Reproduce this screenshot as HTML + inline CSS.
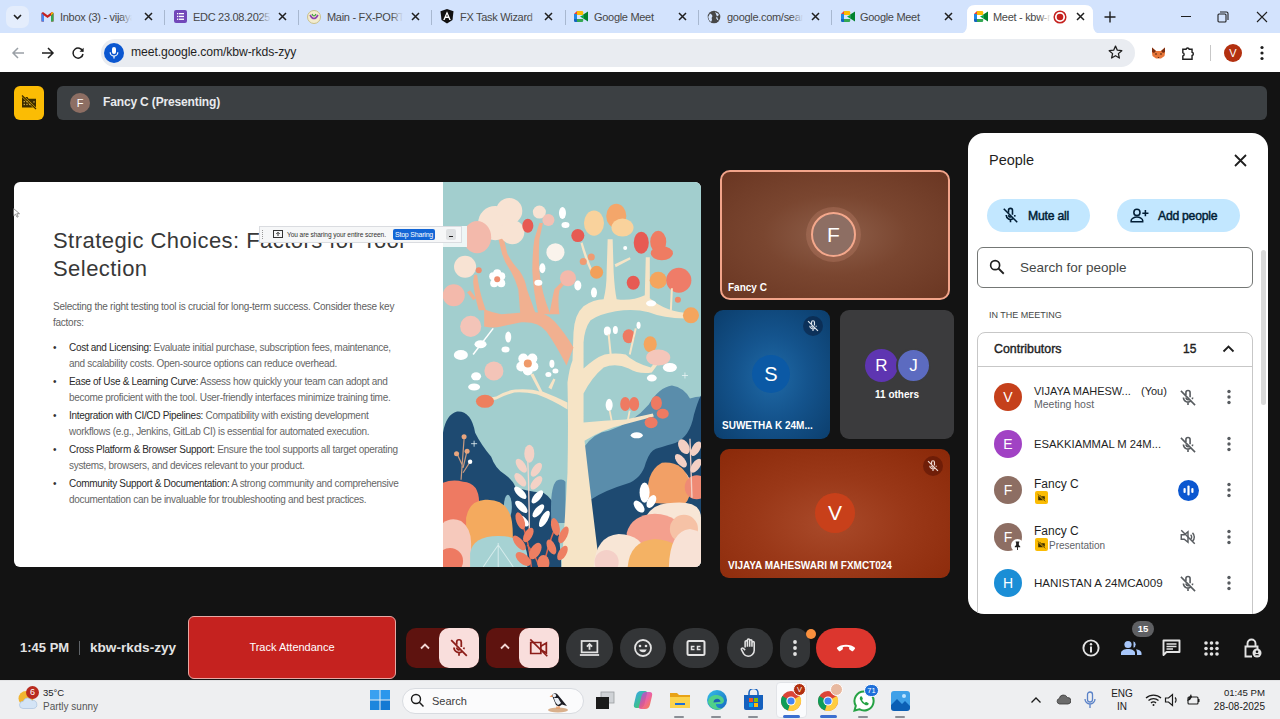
<!DOCTYPE html>
<html><head><meta charset="utf-8">
<style>
*{margin:0;padding:0;box-sizing:border-box}
html,body{width:1280px;height:719px;overflow:hidden;background:#131313;font-family:"Liberation Sans",sans-serif}
.a{position:absolute}
#tabbar{left:0;top:0;width:1280px;height:33px;background:#d3e3fd}
#toolbar{left:0;top:33px;width:1280px;height:39px;background:#fff}
#addr{left:101px;top:39px;width:1034px;height:28px;background:#e9ecf1;border-radius:14px}
#taskbar{left:0;top:680px;width:1280px;height:39px;background:#eeeff1;border-top:1px solid #e2e3e5}
.tabt{position:absolute;top:10px;font-size:11px;line-height:14px;color:#474747;letter-spacing:-0.3px;overflow:hidden;white-space:nowrap}
.tabt::after{content:"";position:absolute;right:0;top:0;width:12px;height:100%;background:linear-gradient(90deg,rgba(211,227,253,0),#d3e3fd)}
.tabt.act::after{background:linear-gradient(90deg,rgba(255,255,255,0),#fff)}
.sep{position:absolute;top:10px;width:1px;height:15px;background:#a8b8d0}
</style></head><body>
<!-- CHROME -->
<div id="tabbar" class="a"></div>
<div class="a" style="left:6px;top:6px;width:23px;height:22px;border-radius:7px;background:#e4edfc"></div>
<svg class="a" style="left:12px;top:12px" width="11" height="10" viewBox="0 0 11 10"><path d="M2 3 L5.5 6.5 L9 3" fill="none" stroke="#1f1f1f" stroke-width="1.6"/></svg>
<!-- tab 1 gmail -->
<svg class="a" style="left:41px;top:11px" width="13" height="11" viewBox="0 0 13 11"><path d="M0.5 2v8.5h2.5V4.5L6.5 7 10 4.5v6h2.5V2L11 1 6.5 4.3 2 1z" fill="#c5221f"/><path d="M0.5 2v8.5h2.5V4.5z" fill="#4285f4"/><path d="M10 4.5v6h2.5V2z" fill="#34a853"/><path d="M11 1l1.5 1L10 4.5V2.5z" fill="#fbbc04"/></svg>
<div class="tabt" style="left:60px;width:72px">Inbox (3) - vijaya</div>
<svg class="a tx" style="left:144px;top:12px" width="9" height="9" viewBox="0 0 9 9"><path d="M1 1L8 8M8 1L1 8" stroke="#1f1f1f" stroke-width="1.5"/></svg>
<div class="sep" style="left:164px"></div>
<!-- tab 2 forms -->
<div class="a" style="left:174px;top:10px;width:13px;height:13px;background:#7248b9;border-radius:2px"></div>
<svg class="a" style="left:176px;top:12px" width="9" height="9" viewBox="0 0 9 9"><g fill="#fff"><rect x="1" y="1" width="1.3" height="1.3"/><rect x="3" y="1" width="5" height="1.3"/><rect x="1" y="3.8" width="1.3" height="1.3"/><rect x="3" y="3.8" width="5" height="1.3"/><rect x="1" y="6.6" width="1.3" height="1.3"/><rect x="3" y="6.6" width="5" height="1.3"/></g></svg>
<div class="tabt" style="left:193px;width:78px">EDC 23.08.2025</div>
<svg class="a" style="left:278px;top:12px" width="9" height="9" viewBox="0 0 9 9"><path d="M1 1L8 8M8 1L1 8" stroke="#1f1f1f" stroke-width="1.5"/></svg>
<div class="sep" style="left:298px"></div>
<!-- tab 3 -->
<div class="a" style="left:307px;top:10px;width:14px;height:14px;border-radius:50%;background:#f3eccf;border:1px solid #c9c08a"></div>
<svg class="a" style="left:309px;top:13px" width="10" height="8" viewBox="0 0 10 8"><path d="M1 2 Q5 9 9 2" fill="none" stroke="#8e44ad" stroke-width="1.6"/><path d="M3 1 Q5 5 7 1" fill="none" stroke="#3c9d3c" stroke-width="1.2"/></svg>
<div class="tabt" style="left:327px;width:76px">Main - FX-PORTAL</div>
<svg class="a" style="left:411px;top:12px" width="9" height="9" viewBox="0 0 9 9"><path d="M1 1L8 8M8 1L1 8" stroke="#1f1f1f" stroke-width="1.5"/></svg>
<div class="sep" style="left:431px"></div>
<!-- tab 4 angular -->
<svg class="a" style="left:440px;top:9px" width="14" height="15" viewBox="0 0 14 15"><path d="M7 0L13.5 2.3 12.5 11 7 14.5 1.5 11 0.5 2.3z" fill="#111"/><path d="M7 2.2L3.2 11h1.5l.8-2h3l.8 2h1.5zM6.1 7.6L7 5.3l.9 2.3z" fill="#fff"/></svg>
<div class="tabt" style="left:460px;width:80px">FX Task Wizard</div>
<svg class="a" style="left:544px;top:12px" width="9" height="9" viewBox="0 0 9 9"><path d="M1 1L8 8M8 1L1 8" stroke="#1f1f1f" stroke-width="1.5"/></svg>
<div class="sep" style="left:565px"></div>
<!-- tab 5 meet -->
<svg class="a meeti" style="left:574px;top:11px" width="14" height="11" viewBox="0 0 14 11"><path d="M3 0h6v3.5L9 0z" fill="#fbbc04"/><path d="M0 3L3 0v3z" fill="#ea4335"/><path d="M0 3h3v5H0z" fill="#1e88e5"/><path d="M0 8h3v3H1.2A1.2 1.2 0 0 1 0 9.8z" fill="#1565c0"/><path d="M3 0h5a1.2 1.2 0 0 1 1.2 1.2V4H3z" fill="#fbbc04"/><path d="M3 8h6.2v1.8A1.2 1.2 0 0 1 8 11H3z" fill="#34a853"/><path d="M9.2 3.5L14 0.5v10L9.2 7.5z" fill="#00832d"/><path d="M9.2 4v3.5L6 5.5z" fill="#00ac47"/></svg>
<div class="tabt" style="left:594px;width:80px">Google Meet</div>
<svg class="a" style="left:678px;top:12px" width="9" height="9" viewBox="0 0 9 9"><path d="M1 1L8 8M8 1L1 8" stroke="#1f1f1f" stroke-width="1.5"/></svg>
<div class="sep" style="left:698px"></div>
<!-- tab 6 globe -->
<svg class="a" style="left:707px;top:10px" width="14" height="14" viewBox="0 0 14 14"><circle cx="7" cy="7" r="6.3" fill="#474747"/><path d="M3 3.5 Q5 4 5.5 6 Q4 8 5 10 L4 12 Q1.5 10 1.2 7z M8 1.5 Q9 3 11 3.5 L12 5 Q10 6 9 8 Q10 10 11.5 10.5" fill="#d3e3fd"/></svg>
<div class="tabt" style="left:727px;width:76px">google.com/search</div>
<svg class="a" style="left:811px;top:12px" width="9" height="9" viewBox="0 0 9 9"><path d="M1 1L8 8M8 1L1 8" stroke="#1f1f1f" stroke-width="1.5"/></svg>
<div class="sep" style="left:831px"></div>
<!-- tab 7 meet -->
<svg class="a" style="left:841px;top:11px" width="14" height="11" viewBox="0 0 14 11"><path d="M0 3L3 0v3z" fill="#ea4335"/><path d="M0 3h3v5H0z" fill="#1e88e5"/><path d="M0 8h3v3H1.2A1.2 1.2 0 0 1 0 9.8z" fill="#1565c0"/><path d="M3 0h5a1.2 1.2 0 0 1 1.2 1.2V4H3z" fill="#fbbc04"/><path d="M3 8h6.2v1.8A1.2 1.2 0 0 1 8 11H3z" fill="#34a853"/><path d="M9.2 3.5L14 0.5v10L9.2 7.5z" fill="#00832d"/><path d="M9.2 4v3.5L6 5.5z" fill="#00ac47"/></svg>
<div class="tabt" style="left:860px;width:80px">Google Meet</div>
<svg class="a" style="left:944px;top:12px" width="9" height="9" viewBox="0 0 9 9"><path d="M1 1L8 8M8 1L1 8" stroke="#1f1f1f" stroke-width="1.5"/></svg>
<!-- active tab -->
<svg class="a" style="left:958px;top:5px" width="144" height="29" viewBox="0 0 144 29"><path d="M0 29 Q9 29 9 20 V8 Q9 0 17 0 H127 Q135 0 135 8 V20 Q135 29 144 29z" fill="#fff"/></svg>
<svg class="a" style="left:974px;top:11px" width="14" height="11" viewBox="0 0 14 11"><path d="M0 3L3 0v3z" fill="#ea4335"/><path d="M0 3h3v5H0z" fill="#1e88e5"/><path d="M0 8h3v3H1.2A1.2 1.2 0 0 1 0 9.8z" fill="#1565c0"/><path d="M3 0h5a1.2 1.2 0 0 1 1.2 1.2V4H3z" fill="#fbbc04"/><path d="M3 8h6.2v1.8A1.2 1.2 0 0 1 8 11H3z" fill="#34a853"/><path d="M9.2 3.5L14 0.5v10L9.2 7.5z" fill="#00832d"/><path d="M9.2 4v3.5L6 5.5z" fill="#00ac47"/></svg>
<div class="tabt act" style="left:993px;width:58px">Meet - kbw-rkds-zyy</div>
<svg class="a" style="left:1053px;top:10px" width="14" height="14" viewBox="0 0 14 14"><circle cx="7" cy="7" r="5.8" fill="none" stroke="#c5221f" stroke-width="1.5"/><circle cx="7" cy="7" r="3.3" fill="#c5221f"/></svg>
<svg class="a" style="left:1076px;top:12px" width="9" height="9" viewBox="0 0 9 9"><path d="M1 1L8 8M8 1L1 8" stroke="#1f1f1f" stroke-width="1.5"/></svg>
<svg class="a" style="left:1104px;top:11px" width="12" height="12" viewBox="0 0 12 12"><path d="M6 0.5V11.5M0.5 6H11.5" stroke="#1f1f1f" stroke-width="1.4"/></svg>
<!-- window controls -->
<div class="a" style="left:1181px;top:16px;width:10px;height:1px;background:#1f1f1f"></div>
<svg class="a" style="left:1217px;top:11px" width="12" height="12" viewBox="0 0 12 12"><rect x="1" y="3" width="8" height="8" rx="1" fill="none" stroke="#1f1f1f" stroke-width="1.1"/><path d="M3 1H9.5Q11 1 11 2.5V9" fill="none" stroke="#1f1f1f" stroke-width="1.1"/></svg>
<svg class="a" style="left:1256px;top:11px" width="12" height="12" viewBox="0 0 12 12"><path d="M1 1L11 11M11 1L1 11" stroke="#1f1f1f" stroke-width="1.1"/></svg>
<!-- toolbar -->
<div id="toolbar" class="a"></div>
<svg class="a" style="left:11px;top:46px" width="14" height="14" viewBox="0 0 14 14"><path d="M13 7H2M7 2L2 7L7 12" fill="none" stroke="#9aa0a6" stroke-width="1.5"/></svg>
<svg class="a" style="left:41px;top:46px" width="14" height="14" viewBox="0 0 14 14"><path d="M1 7H12M7 2L12 7L7 12" fill="none" stroke="#1f1f1f" stroke-width="1.5"/></svg>
<svg class="a" style="left:71px;top:46px" width="14" height="14" viewBox="0 0 14 14"><path d="M11.8 5.5A5 5 0 1 0 12 8" fill="none" stroke="#1f1f1f" stroke-width="1.5"/><path d="M8.5 5.8H12.6V1.7z" fill="#1f1f1f"/></svg>
<div id="addr" class="a"></div>
<div class="a" style="left:104px;top:43px;width:20px;height:20px;border-radius:50%;background:#0b57d0"></div>
<svg class="a" style="left:108px;top:46px" width="12" height="14" viewBox="0 0 12 14"><rect x="4" y="1" width="4" height="7" rx="2" fill="#fff"/><path d="M2.2 6.2A3.8 3.8 0 0 0 9.8 6.2" fill="none" stroke="#fff" stroke-width="1.2"/><path d="M6 10V12.5" stroke="#fff" stroke-width="1.2"/></svg>
<div class="a" style="left:131px;top:45px;font-size:12.2px;color:#1f1f1f;letter-spacing:-0.1px">meet.google.com/kbw-rkds-zyy</div>
<svg class="a" style="left:1107px;top:44px" width="17" height="17" viewBox="0 0 24 24"><path d="M12 3l2.6 5.8 6.3.6-4.8 4.2 1.4 6.2L12 16.6 6.5 19.8l1.4-6.2L3.1 9.4l6.3-.6z" fill="none" stroke="#1f1f1f" stroke-width="1.8" stroke-linejoin="round"/></svg>
<svg class="a" style="left:1151px;top:47px" width="15" height="12" viewBox="0 0 15 12"><path d="M1 0.500L5 4H10L14 0.500L14 6L13.500 9L10 11.500H5L1.500 9L1 6z" fill="#e8773a"/><path d="M1 0.500L5 4L3 6L1 5z M14 0.500L10 4L12 6L14 5z" fill="#7a2e12"/><circle cx="5" cy="7" r="0.8" fill="#3a1a0a"/><circle cx="10" cy="7" r="0.8" fill="#3a1a0a"/><path d="M6.500 10h2l-1 1z" fill="#3a1a0a"/></svg>
<svg class="a" style="left:1180px;top:45px" width="17" height="17" viewBox="0 0 24 24"><path d="M4 6h4.5a2.3 2.3 0 0 1 4.5 0H17v4.3a2.3 2.3 0 0 1 0 4.5V20H4v-4.5a2.3 2.3 0 0 0 0-4.5z" fill="none" stroke="#1f1f1f" stroke-width="2"/></svg>
<div class="a" style="left:1210px;top:45px;width:1px;height:16px;background:#c7c7c7"></div>
<div class="a" style="left:1224px;top:44px;width:18px;height:18px;border-radius:50%;background:#b3300f;color:#fff;font-size:11px;text-align:center;line-height:18px">V</div>
<svg class="a" style="left:1259px;top:45px" width="6" height="16" viewBox="0 0 6 16"><circle cx="3" cy="2.5" r="1.6" fill="#1f1f1f"/><circle cx="3" cy="8" r="1.6" fill="#1f1f1f"/><circle cx="3" cy="13.5" r="1.6" fill="#1f1f1f"/></svg>
<!-- MEET TOP -->
<div class="a" style="left:0;top:72px;width:1280px;height:608px;background:#131313"></div>
<div class="a" style="left:14px;top:86px;width:30px;height:34px;border-radius:6px;background:#fbbc04"></div>
<svg class="a" style="left:19px;top:92px" width="20" height="20" viewBox="0 0 20 20"><path d="M3 5H8.500L9.500 6.800H17V15.500H3z" fill="#3a2c00"/><path d="M10.500 8.300H15.500V14H10.500z" fill="#fbbc04" opacity="0"/><path d="M3 3.500L17 17" stroke="#fbbc04" stroke-width="2.400"/><path d="M3 3.500L17 17" stroke="#3a2c00" stroke-width="1.200"/><path d="M9 8.500L14.500 14H15.500V8.300H10.500z" fill="#fbbc04" opacity="0.0"/><g fill="#c9a640"><rect x="4.600" y="9" width="1.400" height="1.300"/><rect x="7.300" y="9" width="1.400" height="1.300"/><rect x="4.600" y="11.800" width="1.400" height="1.300"/><rect x="7.300" y="11.800" width="1.400" height="1.300"/><rect x="10" y="11.800" width="1.400" height="1.300"/></g><rect x="14.300" y="9.200" width="1.400" height="1.400" fill="#c9a640"/></svg>
<div class="a" style="left:57px;top:86px;width:1210px;height:34px;border-radius:6px;background:#3c4043"></div>
<div class="a" style="left:70px;top:93px;width:20px;height:20px;border-radius:50%;background:#8d6e63;color:#fff;font-size:11px;text-align:center;line-height:20px">F</div>
<div class="a" style="left:103px;top:95px;font-size:12px;font-weight:bold;color:#e8eaed;letter-spacing:-0.15px">Fancy C (Presenting)</div>
<!-- SLIDE -->
<div class="a" style="left:14px;top:182px;width:687px;height:385px;border-radius:6px;overflow:hidden;background:#fff">
  <div class="a" style="left:39px;top:45px;font-size:22px;line-height:28px;color:#383838;letter-spacing:0.45px;white-space:nowrap">Strategic Choices: Factors for Tool<br>Selection</div>
  <div class="a" style="left:39px;top:117px;font-size:10px;line-height:15.6px;color:#5f5f5f;letter-spacing:-0.25px;white-space:nowrap">Selecting the right testing tool is crucial for long-term success. Consider these key<br>factors:</div>
  <div class="a sl" style="left:39px;top:158px;font-size:10px;line-height:15.6px;color:#666;letter-spacing:-0.3px;white-space:nowrap">
    <div style="position:relative;height:34px;padding-left:16px"><span style="position:absolute;left:0;color:#333">•</span><span style="color:#2a2a2a">Cost and Licensing:</span> Evaluate initial purchase, subscription fees, maintenance,<br>and scalability costs. Open-source options can reduce overhead.</div>
    <div style="position:relative;height:34px;padding-left:16px"><span style="position:absolute;left:0;color:#333">•</span><span style="color:#2a2a2a">Ease of Use &amp; Learning Curve:</span> Assess how quickly your team can adopt and<br>become proficient with the tool. User-friendly interfaces minimize training time.</div>
    <div style="position:relative;height:34px;padding-left:16px"><span style="position:absolute;left:0;color:#333">•</span><span style="color:#2a2a2a">Integration with CI/CD Pipelines:</span> Compatibility with existing development<br>workflows (e.g., Jenkins, GitLab CI) is essential for automated execution.</div>
    <div style="position:relative;height:34px;padding-left:16px"><span style="position:absolute;left:0;color:#333">•</span><span style="color:#2a2a2a">Cross Platform &amp; Browser Support:</span> Ensure the tool supports all target operating<br>systems, browsers, and devices relevant to your product.</div>
    <div style="position:relative;height:34px;padding-left:16px"><span style="position:absolute;left:0;color:#333">•</span><span style="color:#2a2a2a">Community Support &amp; Documentation:</span> A strong community and comprehensive<br>documentation can be invaluable for troubleshooting and best practices.</div>
  </div>
  <svg class="a" style="left:429px;top:0" width="258" height="385" viewBox="0 0 257 384" preserveAspectRatio="none">
    <rect width="257" height="384" fill="#a2cece"/>
    <!-- medium blue hill right -->
    <path d="M136 384 L140 265 Q150 250 165 248 Q190 240 205 222 Q215 205 228 203 Q240 205 246 216 Q252 214 257 214 V384z" fill="#5a8dab"/>
    <!-- navy hill right -->
    <path d="M145 384 L147 317 Q160 308 183 301 Q198 296 202 280 Q206 268 212 266 Q225 262 232 260 Q246 254 250 232 Q254 218 257 213 V384z" fill="#1e4a71"/>
    <!-- navy hill left -->
    <path d="M0 384 V250 Q3 232 14 229 Q28 228 32 250 Q38 262 48 274 Q52 286 62 292 Q70 298 72 304 Q80 308 100 310 Q110 316 114 331 L118 384z" fill="#1e4a71"/>
    <!-- medium blue behind trunk left -->
    <path d="M108 340 Q106 305 113 298 Q119 295 122 299 V340z" fill="#5a8dab"/>
    <!-- trunk -->
    <path d="M118 384 Q122 330 124 290 Q125 240 124 200 Q126 185 129 178 L130 150 Q131 132 140 124 Q150 117 160 117 Q163 105 163 90 L164 57 L169 57 L170 90 Q171 108 173 117 Q188 119 201 113 L202 75 L206 75 L206 116 Q222 130 247 131 L247 136 Q222 137 205 130 Q190 126 172 129 Q155 132 147 138 Q141 146 140 160 L140 186 Q152 175 161 172 Q172 170 182 172 Q190 180 207 185 L214 176 L216 179 L208 190 Q195 192 185 186 Q172 180 160 185 Q148 195 140 211 L140 240 Q160 238 182 237 L209 231 L210 234 L183 241 Q160 246 141 258 Q148 320 156 384z" fill="#f6e4c6"/>
    <!-- cream branch left of trunk -->
    <path d="M124 227 Q110 218 94 212 Q80 209 71 210 Q60 213 53 217 L42 219 L42 216 L53 214 Q63 208 72 207 Q88 206 96 209 L87 192 L90 191 L99 209 Q112 214 124 220z M105 205 L110 196 L112 197 L108 207z" fill="#f6e4c6"/>
    <path d="M139 60 Q145 80 150 90 L148 91 Q142 80 137 61z M171 82 L186 75 L187 77 L172 85z" fill="#f6e4c6"/>
    <!-- pink branch -->
    <path d="M130 165 Q121 150 111 139 Q101 128 82 130 L58 132 Q48 130 41 127 L41 144 Q50 146 58 144 L78 140 Q95 139 103 149 Q113 163 123 183z" fill="#f1b090"/>
    <path d="M77 132 L75 107 Q72 97 67.6 89 Q61 80 58.7 71 L55 56 L60.5 56 L64 71 Q68 80 76.5 89 Q82 97 83.6 107 L92.5 132z" fill="#f1b090"/>
    <path d="M95 132 Q90 110 89 89 Q89 70 91 57 L96 41 L99.6 41 L96 57 Q95 72 96 89 Q98 110 107 132z" fill="#f1b090"/>
    <path d="M106 132 Q109 115 111 107 L123 95 L125 97 L116 108 Q114 118 116 132z" fill="#f1b090"/>
    <path d="M35.6 128 Q31 112 30 99.6 L31 92.5 L34 92.5 L35 99.6 Q37 112 42.7 128z" fill="#f1b090"/>
    <path d="M30 118 L24 110 L27 108 L33 116z" fill="#f1b090"/>
    <!-- top cream leaves -->
    <circle cx="52" cy="41" r="17" fill="#f8e3d3"/>
    <circle cx="66" cy="29" r="13" fill="#f8e3d3"/>
    <circle cx="69" cy="50" r="12" fill="#f8e3d3"/>
    <ellipse cx="34" cy="55" rx="14" ry="16" fill="#f3b9ab"/>
    <ellipse cx="84.5" cy="43.6" rx="5.5" ry="7" fill="#e75a53"/>
    <circle cx="96" cy="30" r="6.5" fill="#f8e3d3"/>
    <circle cx="105" cy="38" r="6" fill="#f3c1b5"/>
    <ellipse cx="119" cy="31" rx="3.5" ry="6" fill="#fff"/>
    <ellipse cx="122" cy="43" rx="4" ry="3" fill="#fff"/>
    <circle cx="112" cy="70" r="9" fill="#faf3ec"/>
    <circle cx="22" cy="84.5" r="11" fill="#f8e3d3"/>
    <circle cx="35.6" cy="88" r="3" fill="#ee8e70"/>
    <g fill="#fff"><circle cx="50" cy="94" r="4"/><circle cx="58" cy="94" r="4"/><circle cx="51" cy="101" r="4"/><circle cx="58" cy="101" r="4"/><circle cx="54" cy="91" r="4"/></g><circle cx="54" cy="97" r="3" fill="#ee8e70"/>
    <circle cx="10.7" cy="113" r="11" fill="#f3b9ab"/>
    <ellipse cx="124.5" cy="96" rx="8" ry="8" fill="#f3b9ab"/>
    <ellipse cx="99" cy="86" rx="3" ry="5" fill="#fff"/>
    <ellipse cx="95" cy="100.5" rx="4" ry="3" fill="#fff"/>
    <!-- right top leaves -->
    <ellipse cx="150.4" cy="41" rx="10" ry="12.5" fill="#f9d29c"/>
    <ellipse cx="172.6" cy="33.8" rx="10" ry="12" fill="#f4a66a"/>
    <ellipse cx="178.8" cy="45.4" rx="11" ry="9" fill="#f9d29c"/>
    <circle cx="134.3" cy="53.4" r="6.5" fill="#e75a53"/>
    <ellipse cx="197.5" cy="60.5" rx="7.5" ry="11" fill="#e75a53"/>
    <ellipse cx="214.4" cy="59.6" rx="8" ry="11" fill="#ef7c62"/>
    <ellipse cx="218" cy="71" rx="11" ry="7" fill="#ef7c62"/>
    <circle cx="139.7" cy="79.2" r="3.5" fill="#ef9b72"/><circle cx="147.7" cy="74.7" r="3.5" fill="#ef9b72"/>
    <circle cx="153" cy="90" r="6.5" fill="#f2a05a"/>
    <ellipse cx="189.5" cy="100.5" rx="6.5" ry="7" fill="#e75a53"/>
    <circle cx="214.4" cy="98" r="8.5" fill="#f4a55e"/>
    <circle cx="234.9" cy="98" r="12.5" fill="#ef7c68"/>
    <path d="M228 106 L227 128" stroke="#f6e4c6" stroke-width="2"/>
    <circle cx="234" cy="117.4" r="3" fill="#ef8a6a"/>
    <ellipse cx="134.3" cy="103.2" rx="3.5" ry="5" fill="#fff"/>
    <ellipse cx="150.4" cy="110.3" rx="3" ry="5" fill="#fff"/>
    <ellipse cx="207.3" cy="121" rx="5" ry="3" fill="#fff"/>
    <circle cx="181.5" cy="65.8" r="2" fill="#fff"/>
    <circle cx="247" cy="133" r="8" fill="#f4a55e"/>
    <!-- mid leaves -->
    <circle cx="27.6" cy="144" r="10.5" fill="#f3c4b8"/>
    <ellipse cx="37.4" cy="161.8" rx="6" ry="4" fill="#fff"/>
    <ellipse cx="17.8" cy="172.5" rx="7" ry="5" fill="#fff"/>
    <path d="M50 146 L30 172" stroke="#fff" stroke-width="1.5"/>
    <ellipse cx="65" cy="154.7" rx="3" ry="5.5" fill="#fff"/>
    <ellipse cx="62.3" cy="167" rx="4" ry="3" fill="#fff"/>
    <g fill="#fff"><circle cx="80" cy="176" r="5"/><circle cx="89" cy="176" r="5"/><circle cx="78" cy="184" r="5"/><circle cx="90" cy="184" r="5"/><circle cx="84.5" cy="188" r="5"/></g><circle cx="84.5" cy="181" r="4" fill="#ef9a6a"/>
    <circle cx="50.7" cy="188.5" r="9.5" fill="#f3c4b8"/>
    <ellipse cx="33" cy="193.8" rx="5" ry="4" fill="#fff"/>
    <ellipse cx="31" cy="204.5" rx="6" ry="3.5" fill="#fff"/>
    <ellipse cx="41.8" cy="218.7" rx="9" ry="6.5" fill="#ee7f5e"/>
    <ellipse cx="108.5" cy="181.4" rx="2.5" ry="4" fill="#fff"/><ellipse cx="112" cy="188.5" rx="3" ry="2.5" fill="#fff"/><ellipse cx="105" cy="192" rx="3" ry="2.5" fill="#fff"/>
    <ellipse cx="185" cy="153.8" rx="6" ry="7" fill="#ee7a62"/>
    <ellipse cx="206.4" cy="161.8" rx="6.5" ry="8" fill="#f4a55e"/>
    <ellipse cx="163.7" cy="148.5" rx="3.5" ry="4.5" fill="#fff"/><ellipse cx="171.7" cy="147.6" rx="2.5" ry="4" fill="#fff"/><ellipse cx="194.8" cy="143" rx="2" ry="3.5" fill="#fff"/>
    <path d="M165 152 L167 172 M192 146 L186 172" stroke="#f6e4c6" stroke-width="2"/>
    <ellipse cx="214.4" cy="175" rx="12" ry="8" fill="#f4c6ba"/>
    <ellipse cx="226" cy="185" rx="7" ry="4.5" fill="#fff"/>
    <ellipse cx="208" cy="195.6" rx="5" ry="3.5" fill="#fff"/>
    <ellipse cx="181.5" cy="221.4" rx="5" ry="7" fill="#ee7a62"/><ellipse cx="190.4" cy="221.4" rx="5" ry="7" fill="#ee7a62"/>
    <ellipse cx="212.6" cy="220.5" rx="5.5" ry="7" fill="#ee7a62"/>
    <ellipse cx="218.9" cy="231.2" rx="6" ry="5" fill="#ee7a62"/>
    <ellipse cx="207.3" cy="240" rx="6.5" ry="5.5" fill="#ee7a62"/>
    <ellipse cx="165.5" cy="222.3" rx="3.5" ry="6" fill="#fff"/>
    <ellipse cx="193" cy="252.6" rx="6" ry="3" fill="#fff"/>
    <path d="M186 228 L184 238 M166 228 L168 238" stroke="#f6e4c6" stroke-width="1.8"/>
    <!-- twig buds left -->
    <path d="M21 256 L18 297 M14 271 L19 282 M24 268 L20 285 M27 279 L20 290" stroke="#c99a80" stroke-width="1.2" fill="none"/>
    <circle cx="13.5" cy="271" r="2.5" fill="#e9a57e"/><circle cx="24" cy="268.6" r="2.5" fill="#e9a57e"/><circle cx="27" cy="279" r="2.2" fill="#fff"/><circle cx="21" cy="254" r="2.5" fill="#e9a57e"/>
    <!-- fern left -->
    <path d="M84 265 Q86 310 86 355" stroke="#f4d6cc" stroke-width="1.3" fill="none"/>
    <g fill="#f4d2c6"><ellipse cx="86" cy="271" rx="5" ry="9"/><ellipse cx="78" cy="283" rx="4" ry="8" transform="rotate(-35 78 283)"/><ellipse cx="93" cy="287" rx="4" ry="8" transform="rotate(35 93 287)"/><ellipse cx="77" cy="297" rx="4" ry="8" transform="rotate(-40 77 297)"/><ellipse cx="93" cy="300" rx="4" ry="8" transform="rotate(40 93 300)"/></g>
    <g fill="#fff"><ellipse cx="77" cy="310" rx="3.5" ry="8" transform="rotate(-45 77 310)"/><ellipse cx="94" cy="314" rx="3.5" ry="8" transform="rotate(40 94 314)"/><ellipse cx="78" cy="324" rx="3.5" ry="8" transform="rotate(-45 78 324)"/><ellipse cx="95" cy="328" rx="3.5" ry="8" transform="rotate(40 95 328)"/><ellipse cx="80" cy="338" rx="3.5" ry="7" transform="rotate(-45 80 338)"/><ellipse cx="101" cy="336" rx="3.5" ry="9" transform="rotate(30 101 336)"/></g>
    <ellipse cx="64.6" cy="324" rx="4" ry="12" fill="#8dbcc9"/>
    <!-- left bushes -->
    <path d="M0 300 Q10 296 20 299 Q36 300 36 320 L36 384 H0z" fill="#ee7a62"/>
    <path d="M23 384 V335 Q26 318 42 317 Q60 316 66 330 Q72 340 68 384z" fill="#f4aa5e"/>
    <path d="M0 384 V340 Q8 334 18 338 Q28 345 28 360 V384z" fill="#f6c9bc"/>
    <circle cx="7" cy="378" r="13" fill="#ee7a62"/>
    <path d="M27 384 V370 Q30 353 55 353 Q82 353 84 372 V384z" fill="#a6d2d3"/>
    <path d="M40 384 Q48 372 55 362 M55 384 V360 M70 384 Q62 372 55 362" stroke="#d6ecec" stroke-width="1" fill="none"/>
    <!-- coral plants -->
    <path d="M88 384 Q86 360 78 338 M100 384 Q104 364 112 344 M96 384 Q92 372 84 362" stroke="#d9664e" stroke-width="1.5" fill="none"/>
    <g fill="#ee7f62"><ellipse cx="77" cy="338" rx="4" ry="9" transform="rotate(-20 77 338)"/><ellipse cx="85" cy="352" rx="4" ry="8" transform="rotate(30 85 352)"/><ellipse cx="76" cy="360" rx="4" ry="9" transform="rotate(-40 76 360)"/><ellipse cx="92" cy="368" rx="5" ry="9" transform="rotate(30 92 368)"/><ellipse cx="80" cy="376" rx="5" ry="9" transform="rotate(-50 80 376)"/><ellipse cx="112" cy="344" rx="4" ry="9" transform="rotate(-15 112 344)"/><ellipse cx="120" cy="352" rx="4" ry="9" transform="rotate(25 120 352)"/><ellipse cx="108" cy="364" rx="4" ry="8" transform="rotate(-25 108 364)"/><ellipse cx="119" cy="370" rx="4" ry="8" transform="rotate(30 119 370)"/><ellipse cx="100" cy="380" rx="6" ry="8"/></g>
    <!-- right bushes -->
    <g fill="#f4d0c4"><ellipse cx="240" cy="264" rx="5" ry="8" transform="rotate(-30 240 264)"/><ellipse cx="252" cy="266" rx="4" ry="8" transform="rotate(30 252 266)"/><ellipse cx="237" cy="278" rx="4" ry="8" transform="rotate(-40 237 278)"/><ellipse cx="252" cy="283" rx="4" ry="8" transform="rotate(35 252 283)"/><ellipse cx="239" cy="293" rx="4" ry="8" transform="rotate(-45 239 293)"/></g>
    <path d="M205 320 Q200 290 218 280 Q240 278 246 300 Q248 315 240 322z" fill="#f2a066"/>
    <circle cx="252.8" cy="304.4" r="12" fill="#ef8a74"/>
    <path d="M246 256 L248 315" stroke="#f4d0c4" stroke-width="1.3"/>
    <ellipse cx="200.8" cy="309.8" rx="5" ry="10" fill="#fff"/><ellipse cx="195.4" cy="324" rx="4" ry="7" transform="rotate(-40 195 324)" fill="#fff"/><ellipse cx="208" cy="318.8" rx="4" ry="7" transform="rotate(30 208 318)" fill="#fff"/>
    <path d="M200 384 V340 Q205 320 230 320 Q257 318 257 335 V384z" fill="#f8e6d6"/>
    <path d="M183 384 V350 Q188 332 211 331 Q236 332 240 352 V384z" fill="#f4a08e"/>
    <circle cx="240" cy="346" r="14" fill="#f6c2a6"/>
    <path d="M150 384 Q152 353 175 351 Q200 352 201 372 V384z" fill="#f8e6d6"/>
    <circle cx="163" cy="379" r="12" fill="#f4d0c8"/>
    <path d="M184 384 Q186 358 211 356 Q238 358 240 376 V384z" fill="#f4b264"/>
    <path d="M225 384 Q226 348 246 346 Q257 348 257 352 V384z" fill="#f8e2d6"/>
    <!-- sparkles -->
    <path d="M241 190 V196 M238 193 H244 M31 258 V264 M28 261 H34" stroke="#e8f4f4" stroke-width="0.8"/>
  </svg>
</div>
<!-- share bar -->
<div class="a" style="left:443px;top:226px;width:24px;height:21px;background:#eef6f6"></div>
<div class="a" style="left:259px;top:226px;width:203px;height:17px;background:#f6f7f8;border:1px solid #dadce0"></div>
<div class="a" style="left:262px;top:230px;width:1px;height:9px;border-left:1px dotted #999"></div>
<svg class="a" style="left:273px;top:230px" width="10" height="9" viewBox="0 0 10 9"><rect x="0.5" y="0.5" width="9" height="7" fill="none" stroke="#333" stroke-width="1"/><path d="M5 6V2.5M3.3 4L5 2.3 6.7 4" fill="none" stroke="#333" stroke-width="1"/></svg>
<div class="a" style="left:287px;top:230px;font-size:6.6px;line-height:9px;color:#333;letter-spacing:-0.1px;white-space:nowrap">You are sharing your entire screen.</div>
<div class="a" style="left:393px;top:229px;width:42px;height:11px;border-radius:2px;background:#1366d6;color:#fff;font-size:7px;line-height:11px;text-align:center;letter-spacing:-0.2px;white-space:nowrap">Stop Sharing</div>
<div class="a" style="left:446px;top:229px;width:10px;height:11px;border-radius:2px;background:#dfe1e3"></div>
<div class="a" style="left:449px;top:236px;width:4px;height:1px;background:#222"></div>
<!-- cursor -->
<svg class="a" style="left:13px;top:208px" width="7" height="10" viewBox="0 0 7 10"><path d="M0.5 0.5V8L2.5 6.2 4 9.2 5.2 8.6 3.8 5.7H6.5z" fill="#fff" stroke="#555" stroke-width="0.6"/></svg>
<!-- TILES -->
<div class="a" style="left:720px;top:170px;width:230px;height:130px;border-radius:10px;border:2px solid #f2a48a;background:radial-gradient(ellipse at 50% 50%,#8e5f4a 0%,#7a4630 45%,#6a3622 100%)"></div>
<div class="a" style="left:806px;top:207px;width:55px;height:55px;border-radius:50%;background:rgba(190,130,105,0.35)"></div>
<div class="a" style="left:811px;top:212px;width:45px;height:45px;border-radius:50%;border:2px solid #f4a88c;background:#8d6e63;color:#fff;font-size:21px;line-height:41px;text-align:center">F</div>
<div class="a" style="left:728px;top:282px;font-size:10px;font-weight:bold;color:#fff;white-space:nowrap">Fancy C</div>

<div class="a" style="left:714px;top:310px;width:116px;height:129px;border-radius:9px;background:radial-gradient(ellipse at 50% 52%,#1f69a6 0%,#14538c 45%,#0b3d6b 100%)"></div>
<div class="a" style="left:752px;top:355px;width:38px;height:38px;border-radius:50%;background:#0b59a5;color:#fff;font-size:20px;line-height:38px;text-align:center">S</div>
<div class="a" style="left:803px;top:316px;width:20px;height:20px;border-radius:50%;background:rgba(10,30,60,0.55)"></div>
<svg class="a" style="left:806px;top:319px" width="14" height="14" viewBox="0 0 24 24"><path d="M9.5 8.5V5.5a2.5 2.5 0 0 1 5 0V11" fill="none" stroke="#dfe6ee" stroke-width="2"/><path d="M9.5 11.5a2.5 2.5 0 0 0 3.5 2.2" fill="none" stroke="#dfe6ee" stroke-width="2"/><path d="M6.5 11.5a5.5 5.5 0 0 0 8.8 4.3M17.5 11.5q0 1-.4 1.8M12 17.5V20.5" fill="none" stroke="#dfe6ee" stroke-width="2"/><path d="M3.5 3.5L20.5 20.5" stroke="#dfe6ee" stroke-width="2"/></svg>
<div class="a" style="left:722px;top:420px;font-size:10px;font-weight:bold;color:#fff;white-space:nowrap">SUWETHA K 24M...</div>

<div class="a" style="left:840px;top:310px;width:114px;height:129px;border-radius:9px;background:#3b3b3d"></div>
<div class="a" style="left:865px;top:349px;width:33px;height:33px;border-radius:50%;background:#5e35b1;color:#fff;font-size:17px;line-height:33px;text-align:center">R</div>
<div class="a" style="left:896px;top:348px;width:35px;height:35px;border-radius:50%;background:#5c6bc0;border:2px solid #3b3b3d;color:#fff;font-size:17px;line-height:31px;text-align:center">J</div>
<div class="a" style="left:840px;top:389px;width:114px;text-align:center;font-size:10px;font-weight:bold;color:#fff;white-space:nowrap">11 others</div>

<div class="a" style="left:720px;top:449px;width:230px;height:129px;border-radius:9px;background:radial-gradient(ellipse at 48% 58%,#a94a2a 0%,#9a3818 45%,#8a2808 100%)"></div>
<div class="a" style="left:815px;top:493px;width:40px;height:40px;border-radius:50%;background:#c8401a;color:#fff;font-size:21px;line-height:40px;text-align:center">V</div>
<div class="a" style="left:923px;top:456px;width:20px;height:20px;border-radius:50%;background:rgba(90,20,5,0.6)"></div>
<svg class="a" style="left:926px;top:459px" width="14" height="14" viewBox="0 0 24 24"><path d="M9.5 8.5V5.5a2.5 2.5 0 0 1 5 0V11" fill="none" stroke="#f0dcd6" stroke-width="2"/><path d="M9.5 11.5a2.5 2.5 0 0 0 3.5 2.2" fill="none" stroke="#f0dcd6" stroke-width="2"/><path d="M6.5 11.5a5.5 5.5 0 0 0 8.8 4.3M17.5 11.5q0 1-.4 1.8M12 17.5V20.5" fill="none" stroke="#f0dcd6" stroke-width="2"/><path d="M3.5 3.5L20.5 20.5" stroke="#f0dcd6" stroke-width="2"/></svg>
<div class="a" style="left:728px;top:560px;font-size:10px;font-weight:bold;color:#fff;white-space:nowrap">VIJAYA MAHESWARI M FXMCT024</div>
<!-- PEOPLE PANEL -->
<div class="a" style="left:968px;top:133px;width:300px;height:481px;border-radius:16px;background:#fff"></div>
<div class="a" style="left:989px;top:151px;font-size:14.5px;line-height:18px;color:#1f1f1f">People</div>
<svg class="a" style="left:1234px;top:154px" width="13" height="13" viewBox="0 0 13 13"><path d="M1 1L12 12M12 1L1 12" stroke="#1f1f1f" stroke-width="1.8"/></svg>
<div class="a" style="left:987px;top:199px;width:103px;height:33px;border-radius:17px;background:#c2e7ff"></div>
<svg class="a" style="left:1001px;top:206px" width="19" height="19" viewBox="0 0 24 24"><path d="M9.5 8.5V5.5a2.5 2.5 0 0 1 5 0V11" fill="none" stroke="#001d35" stroke-width="2"/><path d="M9.5 11.5a2.5 2.5 0 0 0 3.5 2.2" fill="none" stroke="#001d35" stroke-width="2"/><path d="M6.5 11.5a5.5 5.5 0 0 0 8.8 4.3M17.5 11.5q0 1-.4 1.8M12 17.5V20.5" fill="none" stroke="#001d35" stroke-width="2"/><path d="M3.5 3.5L20.5 20.5" stroke="#001d35" stroke-width="2"/></svg>
<div class="a" style="left:1028px;top:209px;font-size:12.2px;line-height:15px;color:#001d35;-webkit-text-stroke:0.45px #001d35;letter-spacing:-0.2px;white-space:nowrap">Mute all</div>
<div class="a" style="left:1117px;top:199px;width:123px;height:33px;border-radius:17px;background:#c2e7ff"></div>
<svg class="a" style="left:1130px;top:206px" width="20" height="19" viewBox="0 0 26 24"><circle cx="9" cy="8" r="4" fill="none" stroke="#001d35" stroke-width="2"/><path d="M1.5 20v-1.5c0-2.5 4-4.5 7.5-4.5s7.5 2 7.5 4.5V20z" fill="none" stroke="#001d35" stroke-width="2"/><path d="M20 5v8M16 9h8" stroke="#001d35" stroke-width="2"/></svg>
<div class="a" style="left:1158px;top:209px;font-size:12.2px;line-height:15px;color:#001d35;-webkit-text-stroke:0.45px #001d35;letter-spacing:-0.25px;white-space:nowrap">Add people</div>
<div class="a" style="left:977px;top:247px;width:276px;height:41px;border-radius:6px;border:1px solid #747775"></div>
<svg class="a" style="left:988px;top:258px" width="18" height="18" viewBox="0 0 24 24"><circle cx="9.5" cy="9.5" r="6" fill="none" stroke="#1f1f1f" stroke-width="2.2"/><path d="M14 14L21 21" stroke="#1f1f1f" stroke-width="2.4"/></svg>
<div class="a" style="left:1020px;top:259px;font-size:13.5px;line-height:17px;color:#444746;white-space:nowrap">Search for people</div>
<div class="a" style="left:989px;top:310px;font-size:9px;line-height:11px;color:#444746;white-space:nowrap">IN THE MEETING</div>
<!-- scrollbar -->
<div class="a" style="left:1261px;top:250px;width:5px;height:155px;border-radius:3px;background:#d9d9d9"></div>
<!-- contributors box -->
<div class="a" style="left:968px;top:133px;width:300px;height:481px;border-radius:16px;overflow:hidden"><div class="a" style="left:9px;top:199px;width:276px;height:300px;border-radius:8px;border:1px solid #c7c7c7"></div></div>
<div class="a" style="left:978px;top:366px;width:274px;height:1px;background:#c7c7c7"></div>
<div class="a" style="left:994px;top:342px;font-size:12.4px;line-height:14px;color:#1f1f1f;-webkit-text-stroke:0.4px #1f1f1f;white-space:nowrap">Contributors</div>
<div class="a" style="left:1183px;top:342px;font-size:12px;line-height:14px;color:#1f1f1f;-webkit-text-stroke:0.4px #1f1f1f">15</div>
<svg class="a" style="left:1222px;top:344px" width="13" height="9" viewBox="0 0 13 9"><path d="M1.5 7.5L6.5 2.5 11.5 7.5" fill="none" stroke="#1f1f1f" stroke-width="1.8"/></svg>
<!-- rows -->
<div class="a av" style="left:994px;top:383px;width:28px;height:28px;border-radius:50%;background:#c5401b;color:#fff;font-size:14px;line-height:28px;text-align:center">V</div>
<div class="a" style="left:1034px;top:384px;font-size:11px;line-height:14px;color:#1f1f1f;white-space:nowrap">VIJAYA MAHESW...</div>
<div class="a" style="left:1141px;top:384px;font-size:11px;line-height:14px;color:#1f1f1f;white-space:nowrap">(You)</div>
<div class="a" style="left:1034px;top:398px;font-size:10.5px;line-height:13px;color:#5f6368;white-space:nowrap">Meeting host</div>

<div class="a av" style="left:994px;top:430px;width:28px;height:28px;border-radius:50%;background:#a142c4;color:#fff;font-size:14px;line-height:28px;text-align:center">E</div>
<div class="a" style="left:1034px;top:437px;font-size:11.25px;line-height:14px;color:#1f1f1f;white-space:nowrap">ESAKKIAMMAL M 24M...</div>

<div class="a av" style="left:994px;top:476px;width:28px;height:28px;border-radius:50%;background:#8d6e63;color:#fff;font-size:14px;line-height:28px;text-align:center">F</div>
<div class="a" style="left:1034px;top:477px;font-size:12px;line-height:14px;color:#1f1f1f;white-space:nowrap">Fancy C</div>
<div class="a" style="left:1035px;top:491px;width:13px;height:13px;border-radius:2px;background:#fbbc04"></div>
<svg class="a" style="left:1036px;top:492px" width="11" height="11" viewBox="0 0 20 20"><path d="M4 6H8L9.5 7.5H16V15H4z" fill="#3a2c00"/><path d="M3 4L17 17" stroke="#fbbc04" stroke-width="2.5"/><path d="M3 4L17 17" stroke="#3a2c00" stroke-width="1.2"/></svg>
<div class="a" style="left:1178px;top:480px;width:21px;height:21px;border-radius:50%;background:#0b57d0"></div>
<svg class="a" style="left:1178px;top:480px" width="21" height="21" viewBox="0 0 21 21"><g fill="#fff"><rect x="5.5" y="8" width="2.2" height="5" rx="1.1"/><rect x="9.4" y="5.5" width="2.2" height="10" rx="1.1"/><rect x="13.3" y="8" width="2.2" height="5" rx="1.1"/></g></svg>

<div class="a av" style="left:994px;top:523px;width:28px;height:28px;border-radius:50%;background:#8d6e63;color:#fff;font-size:14px;line-height:28px;text-align:center">F</div>
<div class="a" style="left:1011px;top:539px;width:13px;height:13px;border-radius:50%;background:#fff"></div>
<svg class="a" style="left:1012px;top:540px" width="11" height="11" viewBox="0 0 24 24"><path d="M8 3h8v2l-1 1v5l3 3v2h-5v6h-2v-6H6v-2l3-3V6L8 5z" fill="#1f1f1f"/></svg>
<div class="a" style="left:1034px;top:524px;font-size:12px;line-height:14px;color:#1f1f1f;white-space:nowrap">Fancy C</div>
<div class="a" style="left:1035px;top:538px;width:13px;height:13px;border-radius:2px;background:#fbbc04"></div>
<svg class="a" style="left:1036px;top:539px" width="11" height="11" viewBox="0 0 20 20"><path d="M4 6H8L9.5 7.5H16V15H4z" fill="#3a2c00"/><path d="M3 4L17 17" stroke="#fbbc04" stroke-width="2.5"/><path d="M3 4L17 17" stroke="#3a2c00" stroke-width="1.2"/></svg>
<div class="a" style="left:1049px;top:539px;font-size:10px;line-height:13px;color:#5f6368;white-space:nowrap">Presentation</div>

<div class="a av" style="left:994px;top:569px;width:28px;height:28px;border-radius:50%;background:#1b8ed6;color:#fff;font-size:14px;line-height:28px;text-align:center">H</div>
<div class="a" style="left:1034px;top:576px;font-size:11.6px;line-height:14px;color:#1f1f1f;white-space:nowrap">HANISTAN A 24MCA009</div>

<!-- mic off icons -->
<svg class="a" style="left:1178px;top:388px" width="20" height="20" viewBox="0 0 24 24"><path d="M9.5 8.5V5.5a2.5 2.5 0 0 1 5 0V11" fill="none" stroke="#575b5f" stroke-width="1.9"/><path d="M9.5 11.5a2.5 2.5 0 0 0 3.500 2.200" fill="none" stroke="#575b5f" stroke-width="1.9"/><path d="M6.500 11.500a5.500 5.500 0 0 0 8.800 4.300M17.500 11.500q0 1-.4 1.800M12 17.500V20.500" fill="none" stroke="#575b5f" stroke-width="1.9"/><path d="M3.500 3.500L20.500 20.500" stroke="#575b5f" stroke-width="1.9"/></svg>
<svg class="a" style="left:1178px;top:435px" width="20" height="20" viewBox="0 0 24 24"><path d="M9.5 8.5V5.5a2.5 2.5 0 0 1 5 0V11" fill="none" stroke="#575b5f" stroke-width="1.9"/><path d="M9.5 11.5a2.5 2.5 0 0 0 3.500 2.200" fill="none" stroke="#575b5f" stroke-width="1.9"/><path d="M6.500 11.500a5.500 5.500 0 0 0 8.800 4.300M17.500 11.500q0 1-.4 1.800M12 17.500V20.500" fill="none" stroke="#575b5f" stroke-width="1.9"/><path d="M3.500 3.500L20.500 20.500" stroke="#575b5f" stroke-width="1.9"/></svg>
<svg class="a" style="left:1179px;top:528px" width="18" height="18" viewBox="0 0 24 24"><path d="M3 9h4l5-4v14l-5-4H3z" fill="none" stroke="#575b5f" stroke-width="1.9"/><path d="M15.5 9a4 4 0 0 1 0 6M18 6.5a7.5 7.5 0 0 1 0 11" fill="none" stroke="#575b5f" stroke-width="1.9"/><path d="M3 3L21 21" stroke="#575b5f" stroke-width="1.9"/></svg>
<svg class="a" style="left:1178px;top:574px" width="20" height="20" viewBox="0 0 24 24"><path d="M9.5 8.5V5.5a2.5 2.5 0 0 1 5 0V11" fill="none" stroke="#575b5f" stroke-width="1.9"/><path d="M9.5 11.5a2.5 2.5 0 0 0 3.500 2.200" fill="none" stroke="#575b5f" stroke-width="1.9"/><path d="M6.500 11.500a5.500 5.500 0 0 0 8.800 4.300M17.500 11.500q0 1-.4 1.800M12 17.500V20.500" fill="none" stroke="#575b5f" stroke-width="1.9"/><path d="M3.500 3.500L20.500 20.500" stroke="#575b5f" stroke-width="1.9"/></svg>
<!-- kebabs -->
<svg class="a" style="left:1226px;top:389px" width="6" height="16" viewBox="0 0 6 16"><circle cx="3" cy="2.5" r="1.7" fill="#575b5f"/><circle cx="3" cy="8" r="1.7" fill="#575b5f"/><circle cx="3" cy="13.5" r="1.7" fill="#575b5f"/></svg>
<svg class="a" style="left:1226px;top:436px" width="6" height="16" viewBox="0 0 6 16"><circle cx="3" cy="2.5" r="1.7" fill="#575b5f"/><circle cx="3" cy="8" r="1.7" fill="#575b5f"/><circle cx="3" cy="13.5" r="1.7" fill="#575b5f"/></svg>
<svg class="a" style="left:1226px;top:482px" width="6" height="16" viewBox="0 0 6 16"><circle cx="3" cy="2.5" r="1.7" fill="#575b5f"/><circle cx="3" cy="8" r="1.7" fill="#575b5f"/><circle cx="3" cy="13.5" r="1.7" fill="#575b5f"/></svg>
<svg class="a" style="left:1226px;top:529px" width="6" height="16" viewBox="0 0 6 16"><circle cx="3" cy="2.5" r="1.7" fill="#575b5f"/><circle cx="3" cy="8" r="1.7" fill="#575b5f"/><circle cx="3" cy="13.5" r="1.7" fill="#575b5f"/></svg>
<svg class="a" style="left:1226px;top:575px" width="6" height="16" viewBox="0 0 6 16"><circle cx="3" cy="2.5" r="1.7" fill="#575b5f"/><circle cx="3" cy="8" r="1.7" fill="#575b5f"/><circle cx="3" cy="13.5" r="1.7" fill="#575b5f"/></svg>

<!-- BOTTOM BAR -->
<div class="a" style="left:20px;top:640px;font-size:13px;font-weight:bold;line-height:16px;color:#e3e3e3;white-space:nowrap">1:45 PM</div>
<div class="a" style="left:79px;top:641px;width:1px;height:14px;background:#5f6368"></div>
<div class="a" style="left:90px;top:640px;font-size:13.6px;font-weight:bold;line-height:16px;color:#e3e3e3;white-space:nowrap">kbw-rkds-zyy</div>
<div class="a" style="left:188px;top:616px;width:208px;height:63px;border-radius:6px;background:#c5221f;border:1px solid #e8a8a4"></div>
<div class="a" style="left:188px;top:640px;width:208px;text-align:center;font-size:11px;line-height:14px;color:#fff;white-space:nowrap">Track Attendance</div>
<!-- mic group -->
<div class="a" style="left:406px;top:628px;width:73px;height:40px;border-radius:10px;background:#5e130f"></div>
<div class="a" style="left:439px;top:628px;width:40px;height:40px;border-radius:10px;background:#f9dedc"></div>
<svg class="a" style="left:419px;top:642px" width="12" height="9" viewBox="0 0 12 9"><path d="M2 6.5L6 2.5 10 6.5" fill="none" stroke="#f2d6d4" stroke-width="1.8"/></svg>
<svg class="a" style="left:448px;top:637px" width="22" height="22" viewBox="0 0 24 24"><path d="M9.5 8.5V5.5a2.5 2.5 0 0 1 5 0V11" fill="none" stroke="#8c1d18" stroke-width="1.9"/><path d="M9.5 11.5a2.5 2.5 0 0 0 3.5 2.2" fill="none" stroke="#8c1d18" stroke-width="1.9"/><path d="M6.5 11.5a5.5 5.5 0 0 0 8.8 4.3M17.5 11.5q0 1-.4 1.8M12 17.5V20.5" fill="none" stroke="#8c1d18" stroke-width="1.9"/><path d="M3.5 3.5L20.5 20.5" stroke="#8c1d18" stroke-width="1.9"/></svg>
<!-- cam group -->
<div class="a" style="left:486px;top:628px;width:73px;height:40px;border-radius:10px;background:#5e130f"></div>
<div class="a" style="left:519px;top:628px;width:40px;height:40px;border-radius:10px;background:#f9dedc"></div>
<svg class="a" style="left:499px;top:642px" width="12" height="9" viewBox="0 0 12 9"><path d="M2 6.5L6 2.5 10 6.5" fill="none" stroke="#f2d6d4" stroke-width="1.8"/></svg>
<svg class="a" style="left:528px;top:637px" width="22" height="22" viewBox="0 0 24 24"><path d="M3 6h11v12H3z" fill="none" stroke="#8c1d18" stroke-width="1.9"/><path d="M14 10l6-3.5v11L14 14" fill="none" stroke="#8c1d18" stroke-width="1.9"/><path d="M2.5 2.5L21 21" stroke="#8c1d18" stroke-width="1.9"/></svg>
<!-- present -->
<div class="a" style="left:566px;top:628px;width:47px;height:40px;border-radius:20px;background:#333537"></div>
<svg class="a" style="left:579px;top:638px" width="21" height="20" viewBox="0 0 24 22"><rect x="3" y="3" width="18" height="13" fill="none" stroke="#e3e3e3" stroke-width="2"/><path d="M1 19h22" stroke="#e3e3e3" stroke-width="2"/><path d="M12 13V7M9 9.5l3-3 3 3" fill="none" stroke="#e3e3e3" stroke-width="2"/></svg>
<!-- emoji -->
<div class="a" style="left:620px;top:628px;width:46px;height:40px;border-radius:20px;background:#333537"></div>
<svg class="a" style="left:633px;top:638px" width="20" height="20" viewBox="0 0 20 20"><circle cx="10" cy="10" r="8" fill="none" stroke="#e3e3e3" stroke-width="1.8"/><circle cx="7" cy="8" r="1.3" fill="#e3e3e3"/><circle cx="13" cy="8" r="1.3" fill="#e3e3e3"/><path d="M6.2 11.5a4 4 0 0 0 7.6 0z" fill="#e3e3e3"/></svg>
<!-- cc -->
<div class="a" style="left:673px;top:628px;width:46px;height:40px;border-radius:20px;background:#333537"></div>
<svg class="a" style="left:686px;top:639px" width="20" height="18" viewBox="0 0 20 18"><rect x="1.5" y="2" width="17" height="14" rx="1.5" fill="none" stroke="#e3e3e3" stroke-width="2"/><path d="M8.5 7.5H5.5V10.5H8.5M14.5 7.5H11.5V10.5H14.5" fill="none" stroke="#e3e3e3" stroke-width="1.5"/></svg>
<!-- hand -->
<div class="a" style="left:727px;top:628px;width:46px;height:40px;border-radius:20px;background:#333537"></div>
<svg class="a" style="left:739px;top:637px" width="21" height="21" viewBox="0 0 24 24"><path d="M7 12V5.5a1.3 1.3 0 0 1 2.6 0V11M9.6 11V3.5a1.3 1.3 0 0 1 2.6 0V11M12.2 11V4.5a1.3 1.3 0 0 1 2.6 0V11M14.8 11V6.5a1.3 1.3 0 0 1 2.6 0V15a7 7 0 0 1-7 7 6 6 0 0 1-5-2.7L2.8 14.5a1.3 1.3 0 0 1 2-1.6L7 15" fill="none" stroke="#e3e3e3" stroke-width="1.8" stroke-linejoin="round"/></svg>
<!-- more -->
<div class="a" style="left:780px;top:628px;width:30px;height:40px;border-radius:15px;background:#333537"></div>
<svg class="a" style="left:792px;top:639px" width="6" height="18" viewBox="0 0 6 18"><circle cx="3" cy="3" r="1.9" fill="#e3e3e3"/><circle cx="3" cy="9" r="1.9" fill="#e3e3e3"/><circle cx="3" cy="15" r="1.9" fill="#e3e3e3"/></svg>
<div class="a" style="left:806px;top:629px;width:10px;height:10px;border-radius:50%;background:#fa903e"></div>
<!-- end call -->
<div class="a" style="left:816px;top:628px;width:60px;height:40px;border-radius:20px;background:#dc362e"></div>
<svg class="a" style="left:836px;top:641px" width="20" height="14" viewBox="0 0 24 14"><path d="M12 3C7.5 3 3.5 4.3 1.5 6.5a1.3 1.3 0 0 0 0 1.8l2 2.2a1.3 1.3 0 0 0 1.7.2l2.6-1.8a1.3 1.3 0 0 0 .5-1.2l-.2-1.6c1.2-.4 2.5-.6 3.9-.6s2.7.2 3.9.6l-.2 1.6a1.3 1.3 0 0 0 .5 1.2l2.6 1.8a1.3 1.3 0 0 0 1.7-.2l2-2.2a1.3 1.3 0 0 0 0-1.8C20.5 4.3 16.5 3 12 3z" fill="#fff"/></svg>
<!-- right icons -->
<svg class="a" style="left:1082px;top:639px" width="18" height="18" viewBox="0 0 18 18"><circle cx="9" cy="9" r="7.6" fill="none" stroke="#e3e3e3" stroke-width="1.9"/><rect x="8" y="7.5" width="2" height="6" fill="#e3e3e3"/><circle cx="9" cy="5.2" r="1.2" fill="#e3e3e3"/></svg>
<svg class="a" style="left:1121px;top:640px" width="21" height="16" viewBox="0 0 21 16"><circle cx="7" cy="4.5" r="3.6" fill="#a8c7fa"/><path d="M0 15v-2c0-2.5 3.5-4 7-4s7 1.5 7 4v2z" fill="#a8c7fa"/><path d="M12.5 1.2a3.6 3.6 0 0 1 0 6.6z" fill="#a8c7fa"/><path d="M15 9.3c3 .5 5.5 1.8 5.5 3.7v2H16v-2c0-1.5-.4-2.700-1-3.700z" fill="#a8c7fa"/></svg>
<div class="a" style="left:1132px;top:621px;width:22px;height:16px;border-radius:8px;background:#5f6063;color:#fff;font-size:9.5px;font-weight:bold;line-height:16px;text-align:center">15</div>
<svg class="a" style="left:1162px;top:639px" width="19" height="18" viewBox="0 0 19 18"><path d="M1.5 1.5h16v11.5H4.5L1.5 16z" fill="none" stroke="#e3e3e3" stroke-width="1.9" stroke-linejoin="round"/><path d="M4.5 5h10M4.5 7.5h10M4.5 10h6.5" stroke="#e3e3e3" stroke-width="1.5"/></svg>
<svg class="a" style="left:1204px;top:641px" width="15" height="15" viewBox="0 0 15 15"><g fill="#e3e3e3"><circle cx="2" cy="2" r="1.8"/><circle cx="7.5" cy="2" r="1.8"/><circle cx="13" cy="2" r="1.8"/><circle cx="2" cy="7.5" r="1.8"/><circle cx="7.5" cy="7.5" r="1.8"/><circle cx="13" cy="7.5" r="1.8"/><circle cx="2" cy="13" r="1.8"/><circle cx="7.5" cy="13" r="1.8"/><circle cx="13" cy="13" r="1.8"/></g></svg>
<svg class="a" style="left:1243px;top:638px" width="19" height="20" viewBox="0 0 19 20"><path d="M4.5 8V5.5a4 4 0 0 1 8 0V8" fill="none" stroke="#e3e3e3" stroke-width="1.9"/><path d="M9 18.5H2.5V8.5h12v3" fill="none" stroke="#e3e3e3" stroke-width="1.9"/><circle cx="14" cy="15" r="4.5" fill="#e3e3e3"/><circle cx="14" cy="13.7" r="1.3" fill="#131313"/><path d="M11.8 17.3a2.3 2 0 0 1 4.4 0z" fill="#131313"/></svg>
<!-- TASKBAR -->
<div id="taskbar" class="a"></div>
<svg class="a" style="left:16px;top:688px" width="24" height="24" viewBox="0 0 24 24"><circle cx="10" cy="10.5" r="7.5" fill="#f1b531"/><path d="M7 20.5a3.600 3.600 0 0 1 .2-7.200 4.800 4.800 0 0 1 8.800-.8 3.800 3.800 0 0 1 1.500 8z" fill="#d4e4f6" stroke="#a9c2de" stroke-width="0.7"/></svg>
<div class="a" style="left:26px;top:686px;width:13px;height:13px;border-radius:50%;background:#b92b1f;color:#fff;font-size:9px;line-height:13px;text-align:center">6</div>
<div class="a" style="left:43px;top:687px;font-size:9.5px;line-height:12px;color:#1b1b1b;white-space:nowrap">35°C</div>
<div class="a" style="left:43px;top:701px;font-size:10px;line-height:12px;color:#555;white-space:nowrap">Partly sunny</div>
<svg class="a" style="left:370px;top:690px" width="20" height="20" viewBox="0 0 20 20"><g fill="#1f8fe5"><rect x="0" y="0" width="9.5" height="9.5" fill="#3aa0f0"/><rect x="10.5" y="0" width="9.5" height="9.5" fill="#2a97ec"/><rect x="0" y="10.5" width="9.5" height="9.5" fill="#1d86dd"/><rect x="10.5" y="10.5" width="9.5" height="9.5" fill="#1479d3"/></g></svg>
<div class="a" style="left:402px;top:688px;width:182px;height:26px;border-radius:13px;background:#fbfbfc;border:1px solid #d8dbe0"></div>
<svg class="a" style="left:410px;top:693px" width="15" height="15" viewBox="0 0 15 15"><circle cx="6" cy="6" r="4.5" fill="none" stroke="#1b1b1b" stroke-width="1.4"/><path d="M9.3 9.3L13.5 13.5" stroke="#1b1b1b" stroke-width="1.5"/></svg>
<div class="a" style="left:432px;top:694px;font-size:11px;line-height:14px;color:#3c3c3c">Search</div>
<svg class="a" style="left:546px;top:689px" width="26" height="24" viewBox="0 0 26 24"><ellipse cx="12" cy="21" rx="10" ry="2.600" fill="#d9b08c"/><path d="M6 6.500a3.200 3.200 0 0 1 6-.5L19 14.500l2 2.500-5-1.500q-3 3-6 .5z" fill="#1d1d24"/><path d="M8 9q1 5 4 7q2-1 3-2L12 9z" fill="#e9eef5"/><circle cx="8.300" cy="6.600" r="1.800" fill="#e9eef5"/><path d="M6.200 6L3.500 7.500 6.300 8z" fill="#f07b2e"/><path d="M11 17.500v2M13 17v2.500" stroke="#f07b2e" stroke-width="1"/></svg>
<svg class="a" style="left:595px;top:691px" width="20" height="19" viewBox="0 0 20 19"><rect x="6" y="1" width="13" height="11" fill="#cfd2d6" stroke="#9a9da1" stroke-width="0.8"/><rect x="1" y="6" width="13" height="12" fill="#1b1b1b"/></svg>
<svg class="a" style="left:632px;top:689px" width="22" height="22" viewBox="0 0 22 22"><defs><linearGradient id="cpa" x1="0" y1="0" x2="1" y2="1"><stop offset="0" stop-color="#36a3f7"/><stop offset="0.6" stop-color="#3ec28a"/><stop offset="1" stop-color="#f5c542"/></linearGradient><linearGradient id="cpb" x1="0" y1="0" x2="1" y2="1"><stop offset="0" stop-color="#8b5cf6"/><stop offset="0.5" stop-color="#ec4899"/><stop offset="1" stop-color="#f97316"/></linearGradient></defs><path d="M4 6.500Q5 2 9 2h4q2.500 0 2 2.500L12.500 15Q11.500 19 8 19H4.500Q1 19 2 15z" fill="url(#cpa)"/><path d="M18 15.500Q17 20 13 20H9q-2.500 0-2-2.500L9.500 7Q10.500 3 14 3h3.500Q21 3 20 7z" fill="url(#cpb)" opacity="0.85"/></svg>
<svg class="a" style="left:669px;top:690px" width="22" height="20" viewBox="0 0 22 20"><path d="M1 3h7l2 2h11v13H1z" fill="#e8a317"/><path d="M1 7h20v11H1z" fill="#fcd34d"/><rect x="6" y="13" width="10" height="2" fill="#1e6fd9"/></svg>
<div class="a" style="left:674px;top:716px;width:10px;height:2px;border-radius:1px;background:#8a8f96"></div>
<svg class="a" style="left:706px;top:689px" width="22" height="22" viewBox="0 0 22 22"><defs><linearGradient id="ed1" x1="0" y1="0" x2="1" y2="1"><stop offset="0" stop-color="#36c1e8"/><stop offset="1" stop-color="#1565c0"/></linearGradient></defs><circle cx="11" cy="11" r="10" fill="url(#ed1)"/><path d="M2 13c.5-4.500 4-7 8-7 4.500 0 8 2.600 8 5.800 0 2-1.600 3.200-3.600 3.200H10c-.5 2.500 2.500 5 7 4.300A10 10 0 0 1 2 13z" fill="#4fd08a"/><path d="M7.500 13.500c0-2.300 1.600-3.800 3.700-3.800s3.300 1.400 3.300 3.100z" fill="#1a5fb4"/></svg>
<div class="a" style="left:711px;top:716px;width:10px;height:2px;border-radius:1px;background:#8a8f96"></div>
<svg class="a" style="left:743px;top:689px" width="21" height="22" viewBox="0 0 21 22"><path d="M1 6h19v13a2 2 0 0 1-2 2H3a2 2 0 0 1-2-2z" fill="#1560bd"/><path d="M6 6V4a4.500 4.500 0 0 1 9 0v2" fill="none" stroke="#1560bd" stroke-width="1.5"/><rect x="6" y="9" width="4" height="4" fill="#f35325"/><rect x="11" y="9" width="4" height="4" fill="#81bc06"/><rect x="6" y="14" width="4" height="4" fill="#05a6f0"/><rect x="11" y="14" width="4" height="4" fill="#ffba08"/></svg>
<div class="a" style="left:748px;top:716px;width:10px;height:2px;border-radius:1px;background:#8a8f96"></div>
<div class="a" style="left:776px;top:682px;width:31px;height:36px;border-radius:4px;background:#fafbfd;border:1px solid #e2e4e8"></div>
<svg class="a cr" style="left:780px;top:690px" width="22" height="22" viewBox="0 0 22 22"><circle cx="11" cy="11" r="10" fill="#db4437"/><path d="M11 11L2.300 6A10 10 0 0 0 8 20.500z" fill="#0f9d58"/><path d="M11 11l8.700-5A10 10 0 0 1 8 20.500z" fill="#ffcd40"/><circle cx="11" cy="11" r="4.600" fill="#fff"/><circle cx="11" cy="11" r="3.600" fill="#4285f4"/></svg>
<div class="a" style="left:793px;top:683px;width:13px;height:13px;border-radius:50%;background:#b3300f;border:1px solid #fff;color:#fff;font-size:7.5px;line-height:11px;text-align:center">V</div>
<div class="a" style="left:783px;top:715px;width:17px;height:3px;border-radius:2px;background:#3b6fd0"></div>
<svg class="a" style="left:817px;top:690px" width="22" height="22" viewBox="0 0 22 22"><circle cx="11" cy="11" r="10" fill="#db4437"/><path d="M11 11L2.300 6A10 10 0 0 0 8 20.500z" fill="#0f9d58"/><path d="M11 11l8.700-5A10 10 0 0 1 8 20.500z" fill="#ffcd40"/><circle cx="11" cy="11" r="4.600" fill="#fff"/><circle cx="11" cy="11" r="3.600" fill="#4285f4"/></svg>
<div class="a" style="left:830px;top:683px;width:13px;height:13px;border-radius:50%;background:#e8b9a0;border:1px solid #fff"></div>
<div class="a" style="left:820px;top:715px;width:17px;height:3px;border-radius:2px;background:#3b6fd0"></div>
<svg class="a" style="left:853px;top:690px" width="22" height="22" viewBox="0 0 22 22"><path d="M11 1.500a9.500 9.500 0 0 0-8.200 14.300L1.500 20.500l4.800-1.300A9.500 9.500 0 1 0 11 1.500z" fill="#fff" stroke="#25a244" stroke-width="2"/><path d="M7.500 6.500c.5-.5 1.200-.4 1.500.2l.8 1.800c.2.400 0 .8-.3 1.100l-.5.500c.6 1.200 1.600 2.200 2.800 2.800l.5-.5c.3-.3.700-.5 1.100-.3l1.800.8c.6.300.7 1 .2 1.500-.8.900-2 1.200-3.100.7A10 10 0 0 1 7 9.600c-.4-1.100-.3-2.300.5-3.100z" fill="#25a244"/></svg>
<div class="a" style="left:864px;top:684px;width:15px;height:13px;border-radius:7px;background:#1e6fd9;border:1px solid #fff;color:#fff;font-size:7.5px;line-height:11px;text-align:center">71</div>
<div class="a" style="left:858px;top:716px;width:10px;height:2px;border-radius:1px;background:#8a8f96"></div>
<svg class="a" style="left:890px;top:690px" width="21" height="21" viewBox="0 0 21 21"><rect x="1" y="1" width="19" height="19" rx="3" fill="#3fa0e8"/><path d="M1 15l6-6 5 5 3-3 5 5v2a3 3 0 0 1-3 3H4a3 3 0 0 1-3-3z" fill="#0b5fb5"/><circle cx="14" cy="6" r="2" fill="#bfe3ff"/></svg>
<div class="a" style="left:895px;top:716px;width:10px;height:2px;border-radius:1px;background:#8a8f96"></div>
<!-- tray -->
<svg class="a" style="left:1030px;top:696px" width="12" height="8" viewBox="0 0 12 8"><path d="M1.500 6.500L6 2 10.500 6.500" fill="none" stroke="#1b1b1b" stroke-width="1.3"/></svg>
<svg class="a" style="left:1056px;top:694px" width="15" height="11" viewBox="0 0 15 11"><path d="M3.500 10a2.800 2.800 0 0 1-.2-5.500 4.200 4.200 0 0 1 8-1 3.200 3.200 0 0 1 .7 6.500z" fill="#6b6b6b" stroke="#3a3a3a" stroke-width="0.8"/></svg>
<svg class="a" style="left:1084px;top:691px" width="12" height="18" viewBox="0 0 12 18"><rect x="3.500" y="1" width="5" height="10" rx="2.500" fill="none" stroke="#5a82c8" stroke-width="1.3"/><path d="M1 8a5 5 0 0 0 10 0M6 13v4" fill="none" stroke="#5a82c8" stroke-width="1.3"/></svg>
<div class="a" style="left:1108px;top:687px;font-size:10px;line-height:13px;color:#1b1b1b;text-align:center;width:28px">ENG<br>IN</div>
<svg class="a" style="left:1145px;top:693px" width="17" height="13" viewBox="0 0 17 13"><path d="M1 5a11 11 0 0 1 15 0M3.500 7.500a7.500 7.500 0 0 1 10 0M6 10a3.500 3.500 0 0 1 5 0" fill="none" stroke="#1b1b1b" stroke-width="1.3"/><circle cx="8.500" cy="12" r="1" fill="#1b1b1b"/></svg>
<svg class="a" style="left:1164px;top:693px" width="16" height="14" viewBox="0 0 16 14"><path d="M1.500 5h3l4-3.500v11L4.500 9h-3z" fill="none" stroke="#1b1b1b" stroke-width="1.2"/><path d="M11 4.500a3.500 3.500 0 0 1 0 5" fill="none" stroke="#1b1b1b" stroke-width="1.2"/></svg>
<svg class="a" style="left:1185px;top:693px" width="16" height="13" viewBox="0 0 16 13"><rect x="3" y="4" width="10" height="7" rx="1" fill="none" stroke="#1b1b1b" stroke-width="1.1"/><rect x="13" y="6" width="1.5" height="3" fill="#1b1b1b"/><path d="M2 8L6 1L7 4L5 7z" fill="#1b1b1b"/></svg>
<div class="a" style="left:1212px;top:687px;font-size:9.6px;line-height:12px;color:#1b1b1b;white-space:nowrap;text-align:right;width:53px">01:45 PM</div>
<div class="a" style="left:1212px;top:701px;font-size:10px;line-height:12px;color:#1b1b1b;white-space:nowrap;text-align:right;width:53px">28-08-2025</div>
</body></html>
